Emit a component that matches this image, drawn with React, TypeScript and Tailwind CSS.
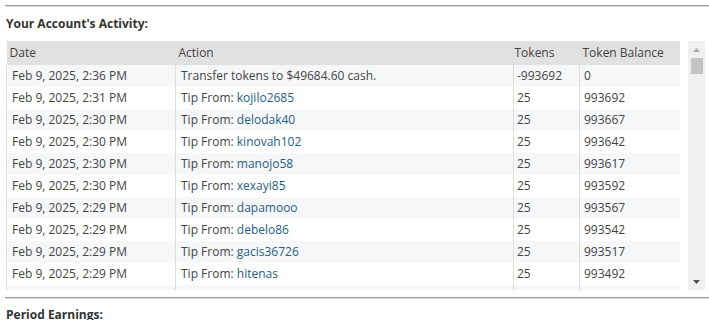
import React from "react";

type Row = {
  date: string;
  action: string;
  user?: string;
  tokens: string;
  balance: string;
};

const rows: Row[] = [
  { date: "Feb 9, 2025, 2:36 PM", action: "Transfer tokens to $49684.60 cash.", tokens: "-993692", balance: "0" },
  { date: "Feb 9, 2025, 2:31 PM", action: "Tip From: ", user: "kojilo2685", tokens: "25", balance: "993692" },
  { date: "Feb 9, 2025, 2:30 PM", action: "Tip From: ", user: "delodak40", tokens: "25", balance: "993667" },
  { date: "Feb 9, 2025, 2:30 PM", action: "Tip From: ", user: "kinovah102", tokens: "25", balance: "993642" },
  { date: "Feb 9, 2025, 2:30 PM", action: "Tip From: ", user: "manojo58", tokens: "25", balance: "993617" },
  { date: "Feb 9, 2025, 2:30 PM", action: "Tip From: ", user: "xexayi85", tokens: "25", balance: "993592" },
  { date: "Feb 9, 2025, 2:29 PM", action: "Tip From: ", user: "dapamooo", tokens: "25", balance: "993567" },
  { date: "Feb 9, 2025, 2:29 PM", action: "Tip From: ", user: "debelo86", tokens: "25", balance: "993542" },
  { date: "Feb 9, 2025, 2:29 PM", action: "Tip From: ", user: "gacis36726", tokens: "25", balance: "993517" },
  { date: "Feb 9, 2025, 2:29 PM", action: "Tip From: ", user: "hitenas", tokens: "25", balance: "993492" },
  { date: "Feb 9, 2025, 2:29 PM", action: "Tip From: ", user: "lajoke21", tokens: "25", balance: "993467" },
];

function Divider() {
  return <div className="h-[2px] border-t border-[#9a9a9a] border-b border-b-[#dcdcdc] ml-[5px]" />;
}

export default function App() {
  return (
    <div
      className="w-[709px] h-[320px] overflow-hidden bg-white pt-[5px] text-[12px] text-[#444]"
      style={{ fontFamily: '"Open Sans", "Noto Sans", sans-serif' }}
    >
      <Divider />
      <div className="mt-[9px] ml-[6px] h-[16px] leading-[16px] font-bold text-[#333]">
        Your Account's Activity:
      </div>

      <div className="mt-[9px] ml-[6px] flex h-[249px]">
        <div className="w-[674px] overflow-hidden">
          <table className="w-[674px] table-fixed border-collapse">
            <colgroup>
              <col className="w-[169px]" />
              <col className="w-[338px]" />
              <col className="w-[66px]" />
              <col className="w-[101px]" />
            </colgroup>
            <thead>
              <tr className="h-[24px] bg-[#e1e1e1] text-left">
                <th className="pl-[3px] font-normal">Date</th>
                <th className="pl-[3px] font-normal">Action</th>
                <th className="pl-[1px] font-normal">Tokens</th>
                <th className="pl-[3px] font-normal">Token Balance</th>
              </tr>
            </thead>
            <tbody>
              {rows.map((r, i) => (
                <tr key={i} className={`h-[22px] ${i % 2 === 0 ? "bg-[#f6f7f9]" : "bg-white"}`}>
                  <td className="pl-[5px] border-l border-r border-[#dedede] whitespace-nowrap">{r.date}</td>
                  <td className="pl-[5px] border-r border-[#dedede] whitespace-nowrap">
                    {r.action}
                    {r.user && <span className="text-[#1f5f80]">{r.user}</span>}
                  </td>
                  <td className="pl-[3px] border-r border-[#dedede]">{r.tokens}</td>
                  <td className="pl-[4px] border-r border-[#dedede]">{r.balance}</td>
                </tr>
              ))}
            </tbody>
          </table>
        </div>

        <div className="ml-[8px] w-[17px] bg-[#f0f0f0] flex flex-col items-center">
          <svg width="9" height="6" viewBox="0 0 9 6" className="mt-[6px]">
            <path d="M1 5 L4.5 1 L8 5 Z" fill="#a8a8a8" />
          </svg>
          <div className="mt-[5px] w-[12px] h-[16px] bg-[#c4c4c4]" />
          <div className="flex-1" />
          <svg width="9" height="6" viewBox="0 0 9 6" className="mb-[5px]">
            <path d="M1 1 L8 1 L4.5 5 Z" fill="#505050" />
          </svg>
        </div>
      </div>

      <div className="mt-[7px]">
        <Divider />
      </div>
      <div className="mt-[8px] ml-[6px] h-[16px] leading-[16px] font-bold text-[#333]">
        Period Earnings:
      </div>
    </div>
  );
}
